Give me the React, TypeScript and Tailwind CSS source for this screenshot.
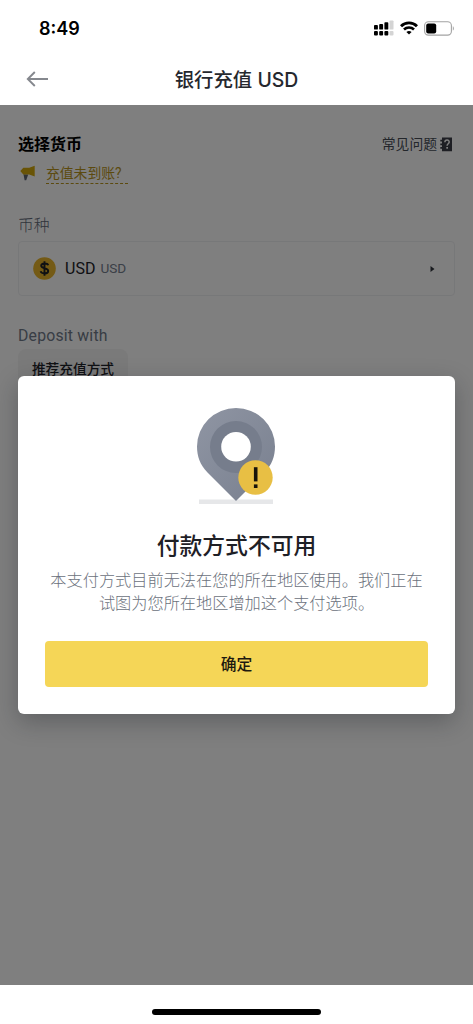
const sans = "font-['Inter','Noto_Sans_CJK_SC',sans-serif]";
const plex = "font-['Roboto','Noto_Sans_CJK_SC',sans-serif]";

function SignalIcon() {
  const bars = [
    { x: 0, y: 5, h: 5 },
    { x: 5.2, y: 4, h: 6 },
    { x: 10.4, y: 2.2, h: 7.8 },
    { x: 15.6, y: 0.4, h: 9.6 },
  ];
  return (
    <svg width="20" height="16" viewBox="0 0 20 16">
      {bars.map((b, i) => (
        <g key={b.x} fill={i === 3 ? '#d4d4d4' : '#000'}>
          <rect x={b.x} y={b.y} width="3.9" height={b.h - 0.4} rx="0.9" />
          <rect x={b.x} y="11" width="3.9" height="4.4" rx="1" />
        </g>
      ))}
    </svg>
  );
}

function WifiIcon() {
  return (
    <svg width="18" height="14" viewBox="0 0 18 14" fill="none" stroke="#000">
      <path d="M1 5.2C5.4 0.7 12.6 0.7 17 5.2" strokeWidth="2.9" />
      <path d="M4 8.5C6.7 5.8 11.3 5.8 14 8.5" strokeWidth="2.6" />
      <path d="M6.4 11C8 9.5 10 9.5 11.6 11L9 13.6Z" fill="#000" stroke="none" />
    </svg>
  );
}

function BatteryIcon() {
  return (
    <svg width="31" height="15" viewBox="0 0 31 15">
      <rect x="0.6" y="0.7" width="26.8" height="13.4" rx="3.8" fill="none" stroke="#a3a3a3" strokeWidth="1.1" />
      <rect x="2.2" y="2.4" width="10" height="10" rx="2" fill="#000" />
      <path d="M28.8 5.2c1.4.5 1.4 3.9 0 4.4z" fill="#a3a3a3" />
    </svg>
  );
}

function MegaphoneIcon() {
  return (
    <svg width="16" height="16" viewBox="0 0 16 16">
      <path d="M3.5 9.2L8.2 9.6L6.2 15.2H4.6z" fill="#5e6673" />
      <path d="M0.3 6.1L3.3 2.8L9.2 2.8L14.7 0.8V11.6L9.2 9.6H3.3z" fill="#d3a90c" />
    </svg>
  );
}

function FaqIcon() {
  return (
    <svg width="13" height="15" viewBox="0 0 13 15">
      <path d="M2 0.5H12V14.2H2V11.8H0.3V10H2V8.2H0.3V6.4H2V4.6H0.3V2.8H2z" fill="#3c3e49" />
      <path d="M4.9 5.2C4.9 2.2 9.3 2.3 9.2 5.1C9.1 6.8 7.1 6.8 7.1 8.7" fill="none" stroke="#fff" strokeWidth="1.5" />
      <rect x="6.3" y="10" width="1.7" height="1.7" fill="#fff" />
    </svg>
  );
}

function LocationIcon() {
  return (
    <svg width="80" height="98" viewBox="0 0 80 98">
      <defs>
        <linearGradient id="pin" x1="0" y1="0" x2="1" y2="1">
          <stop offset="0" stopColor="#8f95a3" />
          <stop offset="1" stopColor="#79808f" />
        </linearGradient>
      </defs>
      <rect x="3" y="92.5" width="74" height="4.5" fill="#e6e7e9" />
      <path d="M40 94L11.5 65.5C4 58 1 49 1 39.5A39 38.5 0 0 1 79 39.5C79 49 76 58 68.5 65.5z" fill="url(#pin)" />
      <circle cx="40" cy="40" r="26" fill="#767d8c" />
      <circle cx="40" cy="39.8" r="14.8" fill="#fff" />
      <circle cx="59.5" cy="70.5" r="17.2" fill="#e8bf44" />
      <rect x="57.9" y="60.2" width="3.6" height="14.2" fill="#17130a" />
      <rect x="57.9" y="77.4" width="3.6" height="3.6" fill="#17130a" />
    </svg>
  );
}

function StatusBar() {
  return (
    <div className="flex h-[56px] items-center justify-between pl-[39px] pr-[18px]">
      <span className="pt-[2px] text-[18px] font-semibold leading-none text-black">8:49</span>
      <div className="flex items-center">
        <SignalIcon />
        <span className="ml-[6px]"><WifiIcon /></span>
        <span className="ml-[6px]"><BatteryIcon /></span>
      </div>
    </div>
  );
}

function Header() {
  return (
    <div className="grid h-[49px] grid-cols-[60px_1fr_60px] items-center">
      <button className="pb-[3px] pl-[26px]" aria-label="back">
        <svg width="23" height="16" viewBox="0 0 23 16" fill="none" stroke="#85888e" strokeWidth="1.9">
          <path d="M22 8H2M8.8 1L1.8 8L8.8 15" />
        </svg>
      </button>
      <h1 className="text-center text-[19.4px] font-medium leading-none text-[#26282e]">银行充值 USD</h1>
    </div>
  );
}

function DepositForm() {
  return (
    <div className={`px-[18px] pt-[28px] ${plex}`}>
      <div className="flex h-6 items-center justify-between">
        <h2 className="text-[16px] font-bold text-black">选择货币</h2>
        <div className="flex items-center gap-[3px] pb-[2px] pr-[2px] text-[13.8px] text-[#474d57]">
          <span>常见问题</span>
          <FaqIcon />
        </div>
      </div>
      <div className="mt-[5px] flex h-[22px] items-center gap-[10px] pl-[2px]">
        <MegaphoneIcon />
        <span className="w-[82px] border-b border-dashed border-[#b8941c] text-[13.8px] leading-[20px] text-[#b8941c]">充值未到账?</span>
      </div>
      <div className="mt-[30px] h-6 text-[15.8px] font-light leading-6 text-[#5f6878]">币种</div>
      <div className="mt-[3px] flex h-[55px] items-center rounded-[4px] border border-[#eff0f3] pl-[14px] pr-[19px]">
        <svg width="23" height="23" viewBox="0 0 23 23">
          <circle cx="11.5" cy="11.5" r="11.3" fill="#e8b52a" />
          <path d="M15.2 8.3C14.3 5.8 8.2 5.9 8.2 8.8C8.2 12 15.2 10.4 15.2 14C15.2 17.2 8.6 17.2 7.6 14.3M11.5 4.3V18.7" fill="none" stroke="#1e2026" strokeWidth="1.9" />
        </svg>
        <span className="ml-[9px] text-[16px] text-[#1e2329]">USD</span>
        <span className="ml-[5px] text-[13.6px] text-[#76808f]">USD</span>
        <svg className="ml-auto" width="5" height="6" viewBox="0 0 5 6">
          <path d="M0.5 0L4.5 3L0.5 6z" fill="#30343c" />
        </svg>
      </div>
      <div className="mt-[28px] h-6 text-[15.8px] leading-6 tracking-[0.2px] text-[#707a8a]">Deposit with</div>
      <div className="mt-px flex h-[40px] w-[110px] items-center justify-center rounded-[8px] bg-[#f5f5f5] text-[13.7px] font-medium text-[#1e2329]">推荐充值方式</div>
    </div>
  );
}

function UnavailableDialog() {
  return (
    <div className="absolute left-[18px] top-[271px] flex h-[338px] w-[437px] flex-col items-center rounded-[6px] bg-white px-[27px] shadow-[0_8px_24px_rgba(24,26,32,0.3)]">
      <div className="mt-[31px] pr-px">
        <LocationIcon />
      </div>
      <h2 className="mt-[24px] text-[22.8px] font-medium leading-[34px] text-[#1e2026]">付款方式不可用</h2>
      <p className="mt-[6px] whitespace-nowrap text-center text-[16.2px] font-light leading-[23px] text-[#6b717c]">
        本支付方式目前无法在您的所在地区使用。我们正在
        <br />
        试图为您所在地区增加这个支付选项。
      </p>
      <button className="mt-[26px] h-[46px] w-full rounded-[4px] bg-[#f5d657] pt-px text-[15.8px] font-medium text-[#1e1a10]">确定</button>
    </div>
  );
}

export default function App() {
  return (
    <div className={`flex h-[1024px] w-[473px] flex-col overflow-hidden bg-white ${sans}`}>
      <StatusBar />
      <Header />
      <main className="relative h-[880px] overflow-hidden bg-white">
        <DepositForm />
        <div className="absolute inset-0 bg-black/50" />
        <UnavailableDialog />
      </main>
      <footer className="flex flex-1 justify-center pt-[24px]">
        <div className="h-[6px] w-[169px] rounded-full bg-black" />
      </footer>
    </div>
  );
}
